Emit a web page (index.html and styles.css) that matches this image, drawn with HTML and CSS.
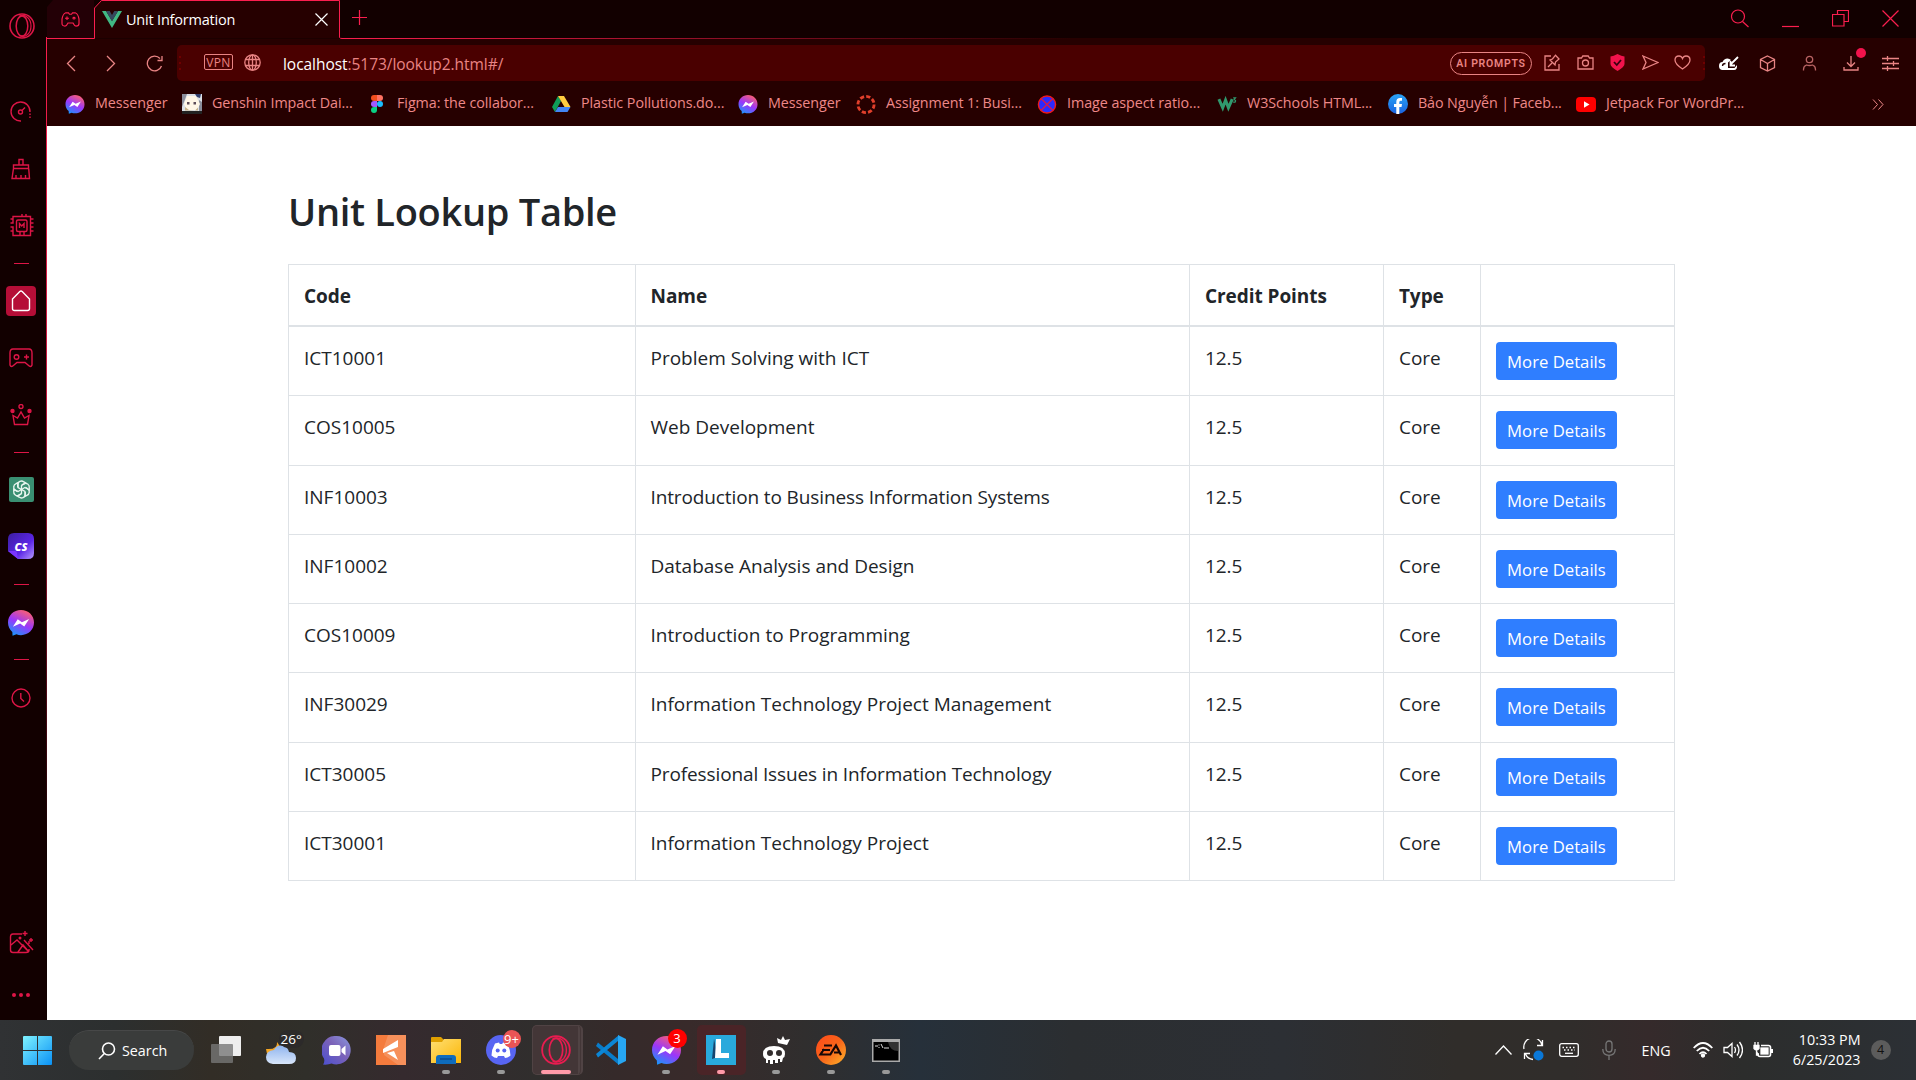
FILE: index.html
```html
<!DOCTYPE html>
<html lang="en">
<head>
<meta charset="utf-8">
<title>Unit Information</title>
<link rel="stylesheet" href="styles.css">
</head>
<body>
<svg class="defs" width="0" height="0" aria-hidden="true">
  <defs>
    <linearGradient id="msg" x1="0.7" y1="0" x2="0.2" y2="1"><stop offset="0" stop-color="#fd6070"/><stop offset=".5" stop-color="#9b36fb"/><stop offset="1" stop-color="#139afb"/></linearGradient>
    <linearGradient id="win" x1="0" y1="0" x2="1" y2="1"><stop offset="0" stop-color="#7ff3ff"/><stop offset="1" stop-color="#0a91f5"/></linearGradient>
    <linearGradient id="chat" x1="1" y1="0" x2="0" y2="1"><stop offset="0" stop-color="#8b9ae0"/><stop offset=".45" stop-color="#7b62b8"/><stop offset="1" stop-color="#4a4fd0"/></linearGradient>
    <linearGradient id="cloud" x1="0" y1="0" x2="0" y2="1"><stop offset="0" stop-color="#8fb4ee"/><stop offset="1" stop-color="#d8e6fa"/></linearGradient>
    <linearGradient id="fold" x1="0" y1="0" x2="1" y2="1"><stop offset="0" stop-color="#ffdf73"/><stop offset="1" stop-color="#fbb606"/></linearGradient>
    <linearGradient id="ea" x1="0" y1="0" x2="1" y2="1"><stop offset="0" stop-color="#ff4a1a"/><stop offset=".5" stop-color="#f8641a"/><stop offset="1" stop-color="#ffb52a"/></linearGradient>
    <linearGradient id="cs" x1="0" y1="0" x2="1" y2="1"><stop offset="0" stop-color="#3b1fa0"/><stop offset=".6" stop-color="#5b25e6"/><stop offset="1" stop-color="#b79bff"/></linearGradient>
    <linearGradient id="fb" x1="0" y1="0" x2="0" y2="1"><stop offset="0" stop-color="#2aa4f6"/><stop offset="1" stop-color="#1b62e0"/></linearGradient>
    <symbol id="messenger" viewBox="0 0 24 24"><path fill="url(#msg)" d="M12 0C5.200 0 0 5 0 11.600c0 3.500 1.500 6.500 4 8.600l.2 3.600 3.600-1.400c1.300.5 2.700.8 4.200.8 6.800 0 12-5 12-11.600S18.800 0 12 0z"/><path fill="#fff" d="M4.500 15.500l4.500-7 3.800 2.700 6.700-3-4.500 7-3.800-2.700z"/></symbol>
    <symbol id="opera" viewBox="0 0 26 26"><circle cx="13" cy="13" r="12" fill="none" stroke="currentColor" stroke-width="1.600"/><ellipse cx="13" cy="13" rx="5.800" ry="10" fill="none" stroke="currentColor" stroke-width="1.500"/><path d="M10 3.200C17 .5 22 6 22 13s-5 12.500-12 9.800" fill="none" stroke="currentColor" stroke-width="1.200"/></symbol>
  </defs>
</svg>

<div class="window">
  <aside class="sidebar">
    <svg class="logo" width="26" height="26"><use href="#opera"/></svg>
    <div class="side-item"><svg width="22" height="22" viewBox="0 0 22 22"><path d="M11 20a9.500 9.500 0 1 1 9-9"/><path stroke-dasharray="1.500 1.500" d="M20 12.500v6"/><circle cx="10.500" cy="11" r="2"/><path d="M12 9.500L15 6.500"/></svg></div>
    <div class="side-item"><svg width="22" height="22" viewBox="0 0 22 22"><path d="M9 7V1.500h4V7M3.500 10.500V7h15v3.500h-15L2 20.500h17.500l-.8-10M6 20v-3M11 20v-3M15.500 20v-3"/></svg></div>
    <div class="side-item"><svg class="shift" width="26" height="24" viewBox="0 0 26 24"><path d="M4 5V2.500h17.500v19H4V17M1.500 5H4M1.500 9H4V5M1.500 13H4v4H1.500M13 2V0M17 2V0M22 5h2.500M22 9h2.500M22 13h2.500M22 17h2.500M11 22v-4M15 22v-4"/><rect x="7.500" y="6" width="10.500" height="11.500" rx="1.500"/><path d="M10.500 14V9.500l2.300 2.500L15 9.500V14"/></svg></div>
    <div class="dash"></div>
    <div class="side-item"><span class="home"><svg width="20" height="22" viewBox="0 0 20 22"><path d="M8.800 1.500Q10 .5 11.200 1.500L18.500 9v9.500q0 2-2 2h-13q-2 0-2-2V9z"/></svg></span></div>
    <div class="side-item"><svg width="24" height="20" viewBox="0 0 24 20"><path d="M4 1h16q3 0 3 4v12q-1 3-4 0l-3-2.500H8L5 17q-3 3-4 0V5q0-4 3-4z"/><circle cx="7.500" cy="9" r="2.300"/><path d="M17.500 6.500v5M15 9h5"/></svg></div>
    <div class="side-item"><svg width="22" height="22" viewBox="0 0 22 22"><circle cx="11" cy="2.500" r="2"/><circle cx="2.500" cy="7" r="1.500" fill="currentColor"/><circle cx="19.500" cy="7" r="1.500" fill="currentColor"/><path d="M3 11.500l1.500 9h13l1.500-9-4.500 2.500L11 8l-3.500 6z"/></svg></div>
    <div class="dash"></div>
    <div class="side-item up"><span class="gpt"><svg width="19" height="19" viewBox="-10 -10 20 20"><g><path id="pt" d="M-4-2.500v-2.500a4 4 0 0 1 6.500-3L4.500-6.800 0-4.200V1"/><use href="#pt" transform="rotate(60)"/><use href="#pt" transform="rotate(120)"/><use href="#pt" transform="rotate(180)"/><use href="#pt" transform="rotate(240)"/><use href="#pt" transform="rotate(300)"/></g></svg></span></div>
    <div class="side-item up"><span class="cs"><svg width="26" height="26" viewBox="0 0 26 26"><path fill="url(#cs)" d="M6 0h14q6 0 6 6v14q0 6-6 6H10L0 18V6q0-6 6-6z"/><path fill="#7a35ff" d="M0 18h7q2 0 2 2l1 6z"/></svg><b>CS</b></span></div>
    <div class="dash"></div>
    <div class="side-item down"><svg width="26" height="26" class="plain"><use href="#messenger"/></svg></div>
    <div class="dash"></div>
    <div class="side-item down"><svg width="20" height="20" viewBox="0 0 20 20"><circle cx="10" cy="10" r="9"/><path d="M9.800 5v5.500l3.200 3"/></svg></div>
    <div class="side-bottom">
      <svg width="25" height="24" viewBox="0 0 25 24"><path d="M13 3H4Q1.500 3 1.500 6v13q0 2.500 2.500 2.500h13q3 0 3-2.500v-1M20 10v3M2 14l6-5 12 12M9 21l5-7 6 7M15 9l9 10M16 0v5M13.500 2.500h5M22 7v4M20 9h4"/><circle cx="11" cy="7" r=".8"/></svg>
      <span class="dots"><i></i><i></i><i></i></span>
    </div>
  </aside>

  <div class="browser">
    <header class="tabs">
      <div class="corner"><svg width="19" height="15" viewBox="0 0 19 17" preserveAspectRatio="none"><path d="M4.500 1h3l1 1.500h2L11.500 1h3Q17 2 18 8v5q0 3-3 3-1.500 0-3-3.500h-5Q5.500 16 4 16q-3 0-3-3V8Q2 2 4.500 1z"/><path d="M6 5v4M4 7h4"/><circle cx="13" cy="7" r="1"/></svg></div>
      <div class="tab">
        <svg class="tab-edge" width="248" height="39" viewBox="0 0 248 39"><path fill="#260000" stroke="#fa1e4e" d="M0 38.500h.5V8l7-7.500h238v37q.5 1 2.500 1"/></svg>
        <div class="tab-body">
          <svg width="20" height="17" viewBox="0 0 20 17"><path fill="#41b883" d="M0 0h4l6 10 6-10h4L10 17z"/><path fill="#35495e" d="M4 0h3.700L10 4l2.300-4H16l-6 10.300z"/></svg>
          <span class="tab-title">Unit Information</span>
          <svg class="x" width="13" height="13" viewBox="0 0 13 13"><path d="M.5.5l12 12M12.500.5L.5 12.500"/></svg>
        </div>
      </div>
      <div class="tab-rest">
        <svg width="15" height="15" viewBox="0 0 15 15"><path d="M7.500 0v15M0 7.500h15"/></svg>
        <div class="controls">
          <svg width="19" height="19" viewBox="0 0 19 19"><circle cx="8" cy="7.500" r="6.500"/><path d="M12.500 12.500L18.500 18"/></svg>
          <svg width="17" height="19" viewBox="0 0 17 19"><path d="M0 16.500h17"/></svg>
          <svg width="17" height="17" viewBox="0 0 17 17"><path d="M5.500 4.500V.5h11v11h-4M.5 4.500h11.500v11.500H.5z"/></svg>
          <svg width="17" height="17" viewBox="0 0 17 17"><path d="M.5.5l16 16M16.500.5l-16 16"/></svg>
        </div>
      </div>
    </header>

    <div class="toolbar">
      <div class="nav">
        <svg width="10" height="17" viewBox="0 0 10 17"><path d="M9 1L1.500 8.500 9 16"/></svg>
        <svg width="10" height="17" viewBox="0 0 10 17"><path d="M1 1l7.500 7.500L1 16"/></svg>
        <svg width="17" height="17" viewBox="0 0 17 17"><path d="M15.500 11A7.300 7.300 0 1 1 14 3.500M16 1v4.500h-4.500"/></svg>
      </div>
      <div class="address">
        <span class="grip"></span>
        <span class="vpn">VPN</span>
        <svg class="globe" width="17" height="17" viewBox="0 0 17 17"><circle cx="8.500" cy="8.500" r="7.700"/><ellipse cx="8.500" cy="8.500" rx="3.800" ry="7.700"/><path d="M1.500 5.500h14M1.500 11.500h14M8.500 1v15"/></svg>
        <span class="url"><b>localhost</b>:5173/lookup2.html#/</span>
        <span class="ai">AI PROMPTS</span>
        <div class="addr-icons">
          <svg width="17" height="17" viewBox="0 0 17 17"><path d="M7 2H1v14h14v-6M4 13l4-4M6 6l5 5 .5-3L15 5l-3.500-3.800L8.500 5z"/></svg>
          <svg width="17" height="15" viewBox="0 0 17 15"><path d="M1 3h3.500l1.300-2h5.400l1.300 2H16v11H1z"/><circle cx="8.500" cy="8" r="3"/></svg>
          <svg class="shield" width="17" height="17" viewBox="0 0 17 17"><path class="s" d="M8.500 0q4 2 7 2.500V10q0 3-7 7-7-4-7-7V2.500q3-.5 7-2.500z"/><path class="c" d="M5 8l2.800 3L12 6"/></svg>
          <svg width="17" height="15" viewBox="0 0 17 15"><path d="M1 1l15 6.500L1 14l3-6.500z"/></svg>
          <svg width="17" height="15" viewBox="0 0 17 15"><path d="M8.500 14Q1 9 1 5t4-4q2.500 0 3.500 2.500Q9.500 1 12 1q4 0 4 4t-7.500 9z"/></svg>
        </div>
        <span class="grip"></span>
      </div>
      <div class="ext">
        <svg width="20" height="15" viewBox="0 0 20 15"><path fill="#fff" stroke="none" d="M3 14q-3-.5-3-4 0-4 3.500-4Q5 2.500 8.500 2.500q2 0 3.500 1.500L9 6.500V12h6.500l2.500-3q.5 5-3 5z"/><path stroke="#260000" d="M3.500 10q0-2.500 3-2.500"/><path stroke="#fff" stroke-width="1.800" d="M19 1l-7 7M11.500 5v4.500H16"/></svg>
        <svg width="17" height="17" viewBox="0 0 17 17"><path d="M8.500 1l7 3.500v8l-7 3.500-7-3.500v-8zM1.500 4.500l7 4 7-4M8.500 8.500V16"/></svg>
        <svg class="dim" width="15" height="16" viewBox="0 0 15 16"><circle cx="7.500" cy="4.500" r="3.200"/><path d="M1.500 15.500v-1q0-3.500 3-4.500 3 1 6 0 3 1 3 4.500v1"/></svg>
        <span class="dl"><svg width="16" height="16" viewBox="0 0 16 16"><path d="M8 1v10M4 7.500L8 11.500l4-4M1 12v3h14v-3"/></svg><i></i></span>
        <svg width="17" height="15" viewBox="0 0 17 15"><path d="M0 2.500h17M0 7.500h17M0 12.500h17M5.500 0v5M11.500 5v5M5.500 10v5"/></svg>
      </div>
    </div>

    <nav class="bookmarks">
      <a><svg width="19" height="19"><use href="#messenger"/></svg><span>Messenger</span></a>
      <a><svg width="20" height="20" viewBox="0 0 20 20"><path fill="#d9dfe6" d="M0 0h20v20H0z"/><path fill="#8a8e9c" d="M0 0h5L2 8 0 13zM17 6l3 2v9h-3z"/><path fill="#fff6e6" d="M5 2h9l4 8-3 6H5L2 10z"/><path fill="#c9b38a" d="M3 13l4 3 6 .5 3-3v3H3z"/><path fill="#32406f" d="M13 0h6l-1 4-3-1z"/><path fill="#5d4c58" d="M5 8h2.500v2.500H5zM11.500 8H14v2.500h-2.500z"/><path fill="#222" d="M0 17h20v3H0z"/></svg><span>Genshin Impact Dai...</span></a>
      <a><svg width="20" height="20" viewBox="0 0 20 20"><path fill="#f24e1e" d="M10 1H7a3 3 0 0 0 0 6h3z"/><path fill="#ff7262" d="M10 1h3a3 3 0 0 1 0 6h-3z"/><path fill="#a259ff" d="M10 7H7a3 3 0 0 0 0 6h3z"/><circle cx="13" cy="10" r="3" fill="#1abcfe"/><path fill="#0acf83" d="M10 13H7a3 3 0 1 0 3 3z"/></svg><span>Figma: the collabor...</span></a>
      <a><svg width="20" height="18" viewBox="0 0 20 18"><path fill="#0f9d58" d="M7 1L1 12l3 5 6-11z"/><path fill="#ffcd40" d="M7 1h6l6.500 11h-6z"/><path fill="#4285f4" d="M4 17l3-5h12.500l-3 5z"/></svg><span>Plastic Pollutions.do...</span></a>
      <a><svg width="19" height="19"><use href="#messenger"/></svg><span>Messenger</span></a>
      <a><svg width="21" height="21" viewBox="0 0 21 21"><circle cx="10.500" cy="10.500" r="8.500" fill="none" stroke="#e13f2b" stroke-width="3" stroke-dasharray="4.400 2.270"/></svg><span>Assignment 1: Busi...</span></a>
      <a><svg width="21" height="21" viewBox="0 0 21 21"><circle cx="10.500" cy="10.500" r="9" fill="#2a2aff" stroke="#f01818" stroke-width="1.500"/><path stroke="#d01a50" stroke-width="1.500" d="M4.500 4.500l12 12M16.500 4.500l-12 12"/></svg><span>Image aspect ratio...</span></a>
      <a><svg width="21" height="16" viewBox="0 0 21 16"><path fill="none" stroke="#30996d" stroke-width="3.200" d="M2 3l4 9 3-8 3 8 4-9"/><path fill="none" stroke="#30996d" stroke-width="1.200" d="M17 1.500h2.500l-1.500 2q2.500.5 1 2.500h-2"/></svg><span>W3Schools HTML...</span></a>
      <a><svg width="20" height="20" viewBox="0 0 20 20"><circle cx="10" cy="10" r="10" fill="url(#fb)"/><path fill="#fff" d="M8.300 20v-7H6v-3h2.300V8q0-4 3.700-4h2v2.700h-1.500q-1.200 0-1.200 1.500V10H14l-.5 3h-2.200v7z"/></svg><span class="tight">Bảo Nguyễn | Faceb...</span></a>
      <a><svg width="20" height="15" viewBox="0 0 20 15"><rect width="20" height="15" rx="4" fill="#f00"/><path fill="#fff" d="M8 4.200v6.600l5.500-3.300z"/></svg><span>Jetpack For WordPr...</span></a>
      <svg class="more" width="12" height="11" viewBox="0 0 12 11"><path d="M1 .5l4.500 5-4.500 5M6.500.5l4.500 5-4.500 5"/></svg>
    </nav>

    <main class="page">
      <h1>Unit Lookup Table</h1>
      <table>
        <colgroup><col class="c25"><col class="c40"><col class="c14"><col class="c7"><col class="c14"></colgroup>
        <thead><tr><th>Code</th><th>Name</th><th>Credit Points</th><th>Type</th><th></th></tr></thead>
        <tbody>
          <tr class="tall"><td>ICT10001</td><td>Problem Solving with ICT</td><td>12.5</td><td>Core</td><td><button>More Details</button></td></tr>
          <tr class="tall"><td>COS10005</td><td>Web Development</td><td>12.5</td><td>Core</td><td><button>More Details</button></td></tr>
          <tr><td>INF10003</td><td class="long">Introduction to Business Information Systems</td><td>12.5</td><td>Core</td><td><button>More Details</button></td></tr>
          <tr><td>INF10002</td><td>Database Analysis and Design</td><td>12.5</td><td>Core</td><td><button>More Details</button></td></tr>
          <tr><td>COS10009</td><td>Introduction to Programming</td><td>12.5</td><td>Core</td><td><button>More Details</button></td></tr>
          <tr class="tall"><td>INF30029</td><td>Information Technology Project Management</td><td>12.5</td><td>Core</td><td><button>More Details</button></td></tr>
          <tr><td>ICT30005</td><td class="long">Professional Issues in Information Technology</td><td>12.5</td><td>Core</td><td><button>More Details</button></td></tr>
          <tr><td>ICT30001</td><td>Information Technology Project</td><td>12.5</td><td>Core</td><td><button>More Details</button></td></tr>
        </tbody>
      </table>
    </main>
  </div>
</div>

<footer class="taskbar">
  <div class="start"><svg width="29" height="29" viewBox="0 0 29 29"><path fill="url(#win)" d="M1 0h13v14H0V1q0-1 1-1zM15 0h13q1 0 1 1v13H15zM0 15h14v14H1q-1 0-1-1zM15 15h14v13q0 1-1 1H15z"/></svg></div>
  <div class="search"><svg width="18" height="18" viewBox="0 0 18 18"><circle cx="10.500" cy="7" r="6" /><path d="M6.300 11.500L1 17"/></svg><span>Search</span></div>
  <div class="apps">
    <div class="app"><svg width="30" height="28" viewBox="0 0 30 28"><rect x="8" width="22" height="20" rx="1" fill="#eee"/><rect y="8" width="22" height="19" rx="1" fill="#777" fill-opacity=".8"/></svg></div>
    <div class="app"><svg width="30" height="30" viewBox="0 0 30 30"><path fill="#f5a623" d="M11 7q1 8-11 7 1 10 10 8 9-5 1-15z"/><path fill="url(#cloud)" d="M7 29q-7-1-7-7t8-7q3-6 9-4 5 1 6 6 7 0 7 6t-7 6z"/></svg><b class="temp">26°</b></div>
    <div class="app"><svg width="29" height="29" viewBox="0 0 29 29"><path fill="url(#chat)" d="M14.500 0a14.200 14.200 0 1 1-5 27.500Q6 29 1 28.500q2-2.500 1-6A14.300 14.300 0 0 1 14.500 0z"/><rect x="7" y="9" width="11.500" height="11" rx="2" fill="#fff"/><path fill="#fff" d="M19.500 13l4-3.500v10l-4-3.500z"/></svg></div>
    <div class="app"><svg width="30" height="30" viewBox="0 0 30 30"><path fill="#f47b3d" d="M0 0h30v30H0z"/><path fill="#f79a68" d="M12 0h18v30h-8L8 20V12z" opacity=".7"/><path fill="#fff" d="M7 14L22 5v7L7 18zM11 18l7-2 4 9z"/></svg></div>
    <div class="app run"><svg width="30" height="28" viewBox="0 0 30 28"><path fill="#e0a000" d="M0 2q0-1 1-1h9l3 3v5H0z"/><path fill="url(#fold)" d="M0 6h11l2-3h17v24H0z"/><path fill="#0f6cbd" d="M5 28v-6q0-3 3-3h14q3 0 3 3v6z"/><path stroke="#073b78" d="M9 23h12"/></svg></div>
    <div class="app run"><svg width="30" height="30" viewBox="0 0 30 30"><circle cx="15" cy="15" r="15" fill="#5865f2"/><path fill="#fff" d="M9 8.500l4-1 .8 1.500h2.400L17 7.500l4 1q3.500 6 3.500 12-3 2.500-5.500 2.500l-1-2h-6l-1 2q-2.500 0-5.500-2.500 0-6 3.500-12z"/><circle cx="11.700" cy="15.500" r="2" fill="#5865f2"/><circle cx="18.300" cy="15.500" r="2" fill="#5865f2"/></svg><b class="badge soft">9+</b></div>
    <div class="app active"><svg width="30" height="30"><use href="#opera"/></svg></div>
    <div class="app"><svg width="30" height="30" viewBox="0 0 30 30"><path fill="#0a7cc9" d="M2 7.500L22 24l1 6L0 11z"/><path fill="#0b86d6" d="M2 22.500L22 6l1-6L0 19z"/><path fill="#27a6f2" d="M22 0l8 4v22l-8 4z"/></svg></div>
    <div class="app run"><svg width="29" height="29"><use href="#messenger"/></svg><b class="badge">3</b></div>
    <div class="app run alert"><svg width="30" height="30" viewBox="0 0 30 30"><path fill="#29a9dc" d="M0 0h30v30H0z"/><path fill="#16456f" d="M8 4L6 24l6-2z"/><path fill="#fff" d="M10 4h5v14h8v5H9z"/></svg></div>
    <div class="app run"><svg width="28" height="28" viewBox="0 0 28 28"><path fill="#fff" fill-rule="evenodd" d="M1 18q0-8 11-8t11 8q0 3-2 4l-1 4h-2v-3h-2v4h-3v-3h-2v4H8v-4H6v3H4v-4q-3-1-3-5zM5 17a3 3 0 1 0 6 0 3 3 0 0 0-6 0zM14 17a3 3 0 1 0 6 0 3 3 0 0 0-6 0z"/><path fill="#fff" d="M16 7l-1-5 4 2 2-4 2 4 5-1-3 6z"/></svg></div>
    <div class="app run"><span class="ea"><svg width="30" height="30" viewBox="0 0 30 30"><circle cx="15" cy="15" r="15" fill="url(#ea)"/><path fill="none" stroke="#170707" stroke-width="2.200" d="M8 10.500h8M6 15h8M14 19.500H4.500L8 14M14 20l6-9.500L25 20M18 17.500h6"/></svg></span></div>
    <div class="app run"><svg width="28" height="23" viewBox="0 0 28 23"><rect x=".75" y=".75" width="26.500" height="21.500" fill="#000" stroke="#aaa" stroke-width="1.500"/><path fill="#333" d="M16 3h10v9q-8 0-10-9z"/><path fill="#aaa" d="M1 1h26v2H1z"/><path stroke="#ddd" d="M3 7h3M7 5.500v1M7 8v1M9 5l2 4M12 9h5"/></svg></div>
  </div>
  <div class="tray">
    <svg width="17" height="10" viewBox="0 0 17 10"><path d="M.5 9.500l8-8.500 8 8.500"/></svg>
    <svg width="21" height="22" viewBox="0 0 21 22"><path d="M1 10A9 9 0 0 1 19 6M19.500 1v5.500H14M10 20.500A9 9 0 0 1 2.500 15M1.500 20v-5.500H7"/><circle cx="15.500" cy="16.500" r="5" fill="#0a78d8" stroke="none"/></svg>
    <svg width="20" height="14" viewBox="0 0 20 14"><rect x=".7" y=".7" width="18.600" height="12.600" rx="2"/><path stroke-dasharray="1.500 2" d="M3.500 4.500h14M5 7h11"/><path d="M6 10.300h8"/></svg>
    <svg class="mic" width="14" height="20" viewBox="0 0 14 20"><rect x="4" y="1" width="6" height="11" rx="3"/><path d="M.8 9q0 6.300 6.200 6.300T13.200 9M7 15.500V20"/></svg>
    <span class="lang">ENG</span>
    <svg width="20" height="16" viewBox="0 0 20 16"><path stroke-width="1.800" d="M.7 6Q10-4 19.300 6M3.800 9q6.200-6.500 12.400 0M6.500 12q3.500-3.700 7 0"/><circle cx="10" cy="13.500" r="1.500" fill="#fff"/></svg>
    <svg width="20" height="18" viewBox="0 0 20 18"><path d="M1 6.500h3.500L9 2.500v13l-4.500-4H1zM11.500 6q2 3 0 6M14 3.500q4 5.500 0 11M16.500 1q6 8 0 16"/></svg>
    <svg width="20" height="16" viewBox="0 0 20 16"><path stroke-width="1.600" d="M8 3.500h7.500q2 0 2 2v7q0 2-2 2H7q-2 0-2-2V11"/><rect x="8" y="6" width="7" height="6" fill="#fff"/><path stroke-width="2" d="M19 7v4"/><path fill="#fff" d="M1 3.500h5v3q-2.500 3-5 0zM2 0v3M5 0v3M3.500 8v5H6"/></svg>
    <div class="clock"><span>10:33 PM</span><span>6/25/2023</span></div>
    <span class="count">4</span>
  </div>
</footer>
</body>
</html>
```
FILE: styles.css
```css
* { box-sizing: border-box; }
body {
  margin: 0;
  width: 1916px;
  height: 1080px;
  overflow: hidden;
  display: flex;
  flex-direction: column;
  background: #fff;
  font-family: "Open Sans", "Noto Sans", sans-serif;
}
svg { display: block; flex: none; }
.defs { position: absolute; }
.window { display: flex; height: 1020px; }

/* Sidebar */
.sidebar {
  width: 47px;
  flex: none;
  background: #120000;
  display: flex;
  flex-direction: column;
  color: #dd1546;
  border-right: 1px solid;
  border-image: linear-gradient(#120000 38px, #fa1e4e 38px, #c0153c 400px, #120000 850px) 1;
}
.sidebar .logo { margin: 12.500px 0 45px 8.500px; }
.sidebar svg { fill: none; stroke: currentColor; stroke-width: 1.400; }
.sidebar .logo, .sidebar .plain { stroke: none; }
.side-item { width: 42px; height: 57px; display: flex; align-items: center; justify-content: center; }
.side-item.up { padding-bottom: 2px; }
.side-item.down { padding-top: 2px; }
.shift { margin-left: 2px; }
.dash { height: 18px; padding: 8.500px 0 0 14px; }
.dash::after { content: ""; display: block; width: 15px; height: 1px; background: #dd1546; }
.home { width: 30px; height: 30px; border-radius: 4px; background: #b50e37; display: grid; place-items: center; color: #fff; }
.gpt { width: 25px; height: 25px; border-radius: 2px; background: #3a8f72; display: grid; place-items: center; color: #e8f5ef; }
.cs { display: grid; place-items: center; }
.cs > * { grid-area: 1 / 1; }
.cs svg { stroke: none; }
.cs b { color: #fff; font: italic 800 11px/1 "Open Sans", sans-serif; }
.side-bottom { margin-top: auto; height: 89px; width: 42px; display: flex; flex-direction: column; align-items: center; gap: 38px; }
.dots { display: flex; gap: 3px; }
.dots i { width: 4px; height: 4px; border-radius: 50%; background: #dd1546; }

/* Tab strip */
.browser { flex: 1; min-width: 0; display: flex; flex-direction: column; }
.tabs { height: 39px; display: flex; background: #120000; flex: none; }
.tabs svg { fill: none; stroke: #fa1e4e; stroke-width: 1.200; }
.corner { width: 47px; background: #230006; border-bottom: 1px solid #fa1e4e; display: flex; align-items: center; padding-left: 13.500px; clip-path: polygon(6px 0, 100% 0, 100% 100%, 0 100%, 0 7px); }
.tab { width: 248px; display: grid; }
.tab > * { grid-area: 1 / 1; }
.tabs .tab-edge path { stroke-width: 1; }
.tab-body { display: flex; align-items: center; padding: 0 14px 1px 8px; }
.tab-body svg { stroke: none; }
.tab-body .x { stroke: #fff; }
.tab-title { flex: 1; margin-left: 4px; color: #fff; font-size: 14.500px; letter-spacing: -.2px; }
.tab-rest {
  flex: 1;
  display: flex;
  padding: 10px 17px 0 10px;
  justify-content: space-between;
  background: linear-gradient(90deg, #fa1e4e, #260000 730px) bottom / 100% 1px no-repeat;
}
.controls { display: flex; gap: 33px; }
.controls svg:first-child { margin: -1px 0 0; }

/* Address row */
.toolbar { height: 45px; background: #260000; display: flex; align-items: center; padding: 3px 15px 0 19px; flex: none; }
.toolbar svg { fill: none; stroke: #e98484; stroke-width: 1.300; }
.nav { display: flex; gap: 30px; width: 111px; }
.address { width: 1528px; height: 36px; border-radius: 5px; background: #4a0000; display: flex; align-items: center; padding-left: 2px; color: #e98484; }
.grip { width: 2px; height: 14px; background: repeating-linear-gradient(#6e0000 0 2px, transparent 2px 6px); }
.vpn { width: 29px; height: 16px; margin: -2px 11px 0 23px; border: 1px solid; border-radius: 2px; font: 12px/15px "Open Sans", sans-serif; text-align: center; letter-spacing: .3px; }
.globe { margin-top: -2px; }
.url { margin-left: 22px; font-size: 15.500px; flex: 1; padding-top: 1px; letter-spacing: -.05px; }
.url b { color: #fff; font-weight: 400; }
.ai { width: 82px; height: 23px; border: 1px solid; border-radius: 12px; font: 600 10.500px/21px Roboto, sans-serif; letter-spacing: .75px; text-align: center; margin-right: 12px; }
.addr-icons { display: flex; gap: 15.500px; align-items: center; margin: -2px 12px 0 0; }
.toolbar .shield .s { fill: #f2134c; stroke: none; }
.toolbar .shield .c { stroke: #3a0010; stroke-width: 1.800; }
.ext { flex: 1; display: flex; gap: 23px; align-items: center; padding-left: 14px; }
.ext svg:nth-child(2) { margin-left: -3px; }
.ext svg:nth-child(3) { margin-left: 3px; }
.dim { opacity: .75; }
.dl { position: relative; margin-left: 3px; }
.dl i { position: absolute; left: 13px; top: -7px; width: 10px; height: 10px; border-radius: 50%; background: #f2134c; }

/* Bookmarks */
.bookmarks {
  height: 42px;
  padding: 0 32px 2px 18px;
  background: #260000;
  flex: none;
  display: grid;
  grid-template-columns: 117px 185px 184px 187px 118px 181px 180px 171px 188px 1fr auto;
  align-items: center;
}
.bookmarks a { display: flex; align-items: center; color: #ee8888; font-size: 14.300px; line-height: 20px; white-space: nowrap; letter-spacing: -.05px; }
.bookmarks a svg { width: 20px; margin-right: 10px; }
.bookmarks a span { padding-bottom: 2px; }
.bookmarks .tight { letter-spacing: -.12px; }
.more { fill: none; stroke: #ee8888; }

/* Page */
.page { padding: 59px 0 0 241px; color: #212529; }
h1 { margin: 0 0 27px; font-size: 38px; line-height: 52px; font-weight: 600; white-space: nowrap; letter-spacing: -.3px; }
table { width: 1387px; table-layout: fixed; border-collapse: collapse; font-size: 19px; line-height: 30px; }
.c25 { width: 25%; } .c40 { width: 40%; } .c14 { width: 14%; } .c7 { width: 7%; }
th, td { border: 1px solid #dee2e6; padding: 16px 15px 0; text-align: left; vertical-align: top; white-space: nowrap; }
th { height: 61px; font-weight: 700; border-bottom-width: 2px; letter-spacing: -.05px; }
td { height: 69px; }
.tall td { height: 70px; }
.long { letter-spacing: -.12px; }
td:last-child { padding-top: 15px; }
button { display: block; width: 121px; height: 38px; padding: 0; border: 0; border-radius: 4px; background: #2f7eff; color: #fff; font: 16.700px/40px "Open Sans", sans-serif; }

/* Taskbar */
.taskbar {
  height: 60px;
  display: flex;
  align-items: center;
  color: #fff;
  background: linear-gradient(90deg, #303234, #2c2f2f 6%, #322d26 11%, #302f2a 16%, #352a2e 21%, #302e2d 28%, #352a2a 32%, #382a2a 36%, #302e2e 42%, #26303a 48%, #2b2e31 56%, #2c2f34 67%, #302d2a 76%, #302d2b 82%, #352a2b 86%, #2c2d2c 91%, #2c3035);
}
.start { width: 69px; padding-left: 23px; }
.search { width: 125px; height: 40px; border-radius: 20px; background: #3a3c3b; border-top: 1px solid #474848; display: flex; align-items: center; padding-left: 29px; gap: 6px; font-size: 14.300px; }
.search svg { fill: none; stroke: #fff; stroke-width: 1.600; }
.apps { display: flex; margin-left: 4.500px; }
.app { width: 55px; height: 60px; display: grid; place-items: center; position: relative; }
.app > svg, .ea { position: relative; }
.run::after { content: ""; position: absolute; left: 23.500px; bottom: 6px; width: 8px; height: 4px; border-radius: 2px; background: #999; }
.active { color: #e81c50; }
.active::before { content: ""; position: absolute; inset: 5px 1px 5px 3px; border-radius: 5px; background: #433637; border: 1px solid #504344; border-right: 5px double #504344; }
.active::after { content: ""; position: absolute; left: 12.500px; bottom: 6px; width: 30px; height: 4px; border-radius: 2px; background: #ff9aa8; }
.alert::before { content: ""; position: absolute; inset: 5px 3px; border-radius: 5px; background: #4a2427; }
.alert::after { background: #ff9aa8; }
.temp { position: absolute; left: 25px; top: 10px; padding: 0 2px; border-radius: 9px; background: #2c2a2a; font: 13.500px/18px "Open Sans", sans-serif; }
.badge { position: absolute; left: 29px; top: 9px; width: 19px; height: 19px; border-radius: 50%; background: #f00; font: 13px/19px "Open Sans", sans-serif; text-align: center; }
.soft { background: #ea5455; width: 18px; height: 18px; line-height: 18px; left: 29px; top: 10px; }
.tray { margin-left: auto; width: 421.500px; display: flex; align-items: center; }
.tray svg { fill: none; stroke: #fff; stroke-width: 1.300; margin-right: 10px; }
.tray svg:first-child { margin-right: 11.500px; }
.tray svg:nth-child(2) { margin-right: 14.500px; }
.tray svg:nth-child(3) { margin-right: 23px; }
.tray .mic { stroke: #777; margin-right: 26px; }
.lang { width: 51px; font-size: 14.300px; }
.clock { width: 78px; display: flex; flex-direction: column; text-align: right; font-size: 14.300px; line-height: 20px; white-space: nowrap; }
.count { width: 20px; height: 20px; margin-left: 10px; border-radius: 50%; background: #5c5c5c; color: #111; font-size: 12.500px; line-height: 20px; text-align: center; }
```
